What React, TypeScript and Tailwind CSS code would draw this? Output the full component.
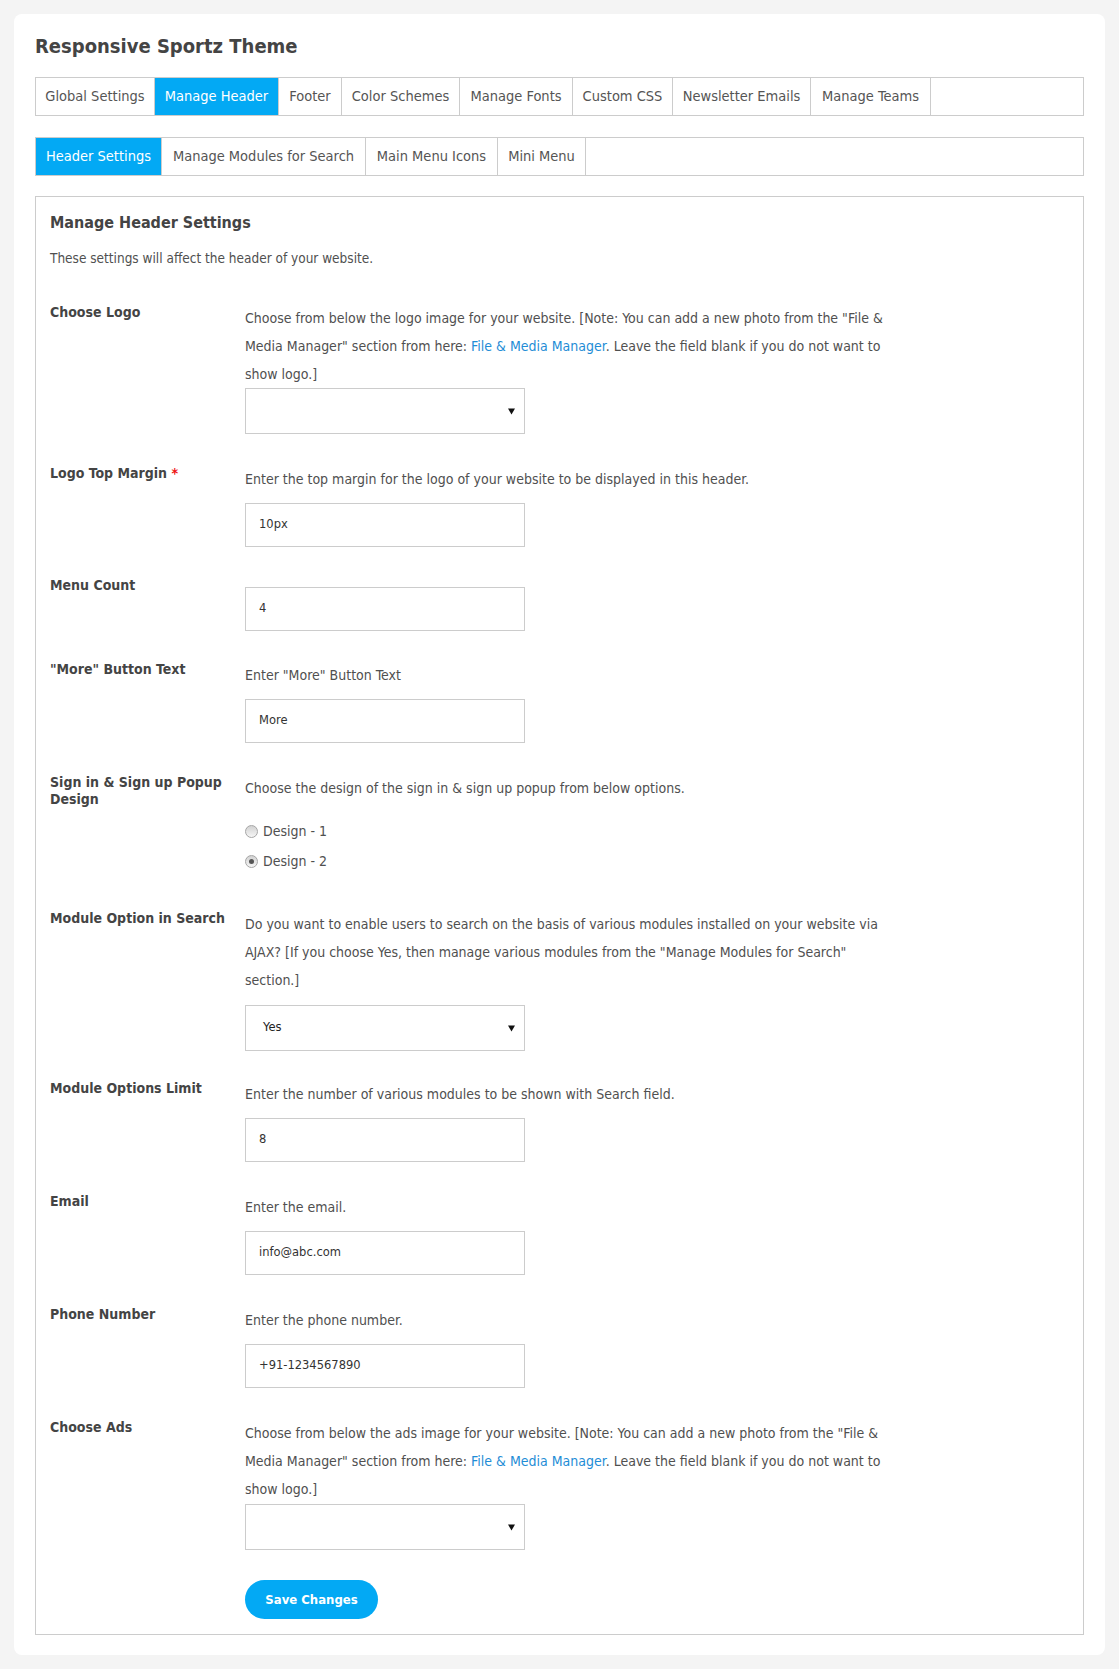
import React from "react"

const font = "font-['Tahoma','DejaVu_Sans_Condensed','Liberation_Sans',sans-serif]"

const mainTabs = [
  { label: "Global Settings", w: "w-[119px]" },
  { label: "Manage Header", w: "w-[124px]", active: true },
  { label: "Footer", w: "w-[63px]" },
  { label: "Color Schemes", w: "w-[118px]" },
  { label: "Manage Fonts", w: "w-[113px]" },
  { label: "Custom CSS", w: "w-[100px]" },
  { label: "Newsletter Emails", w: "w-[138px]" },
  { label: "Manage Teams", w: "w-[120px]" },
]

const subTabs = [
  { label: "Header Settings", w: "w-[126px]", active: true },
  { label: "Manage Modules for Search", w: "w-[204px]" },
  { label: "Main Menu Icons", w: "w-[132px]" },
  { label: "Mini Menu", w: "w-[88px]" },
]

function TabBar({ tabs }: { tabs: { label: string; w: string; active?: boolean }[] }) {
  return (
    <div className="flex h-[39px] border border-[#cccccc] bg-white">
      {tabs.map((t) => (
        <div
          key={t.label}
          className={`${t.w} flex shrink-0 items-center justify-center border-r border-[#cccccc] text-[14.5px] whitespace-nowrap ${
            t.active ? "bg-[#03a9f4] text-white" : "text-[#555555]"
          }`}
        >
          {t.label}
        </div>
      ))}
    </div>
  )
}

function Row({
  label,
  className = "mt-[31px]",
  children,
}: {
  label: React.ReactNode
  className?: string
  children: React.ReactNode
}) {
  return (
    <div className={`flex ${className}`}>
      <div className="w-[195px] shrink-0 text-[14px] leading-[17px] font-bold text-[#444444]">{label}</div>
      <div className="flex-1">{children}</div>
    </div>
  )
}

function Desc({ lines }: { lines: React.ReactNode[] }) {
  return (
    <div className="text-[14px] leading-[28px] text-[#505050]">
      {lines.map((l, i) => (
        <div key={i} className="whitespace-nowrap">
          {l}
        </div>
      ))}
    </div>
  )
}

function TextBox({ value, className = "mt-[10px]" }: { value: string; className?: string }) {
  return (
    <div
      className={`${className} flex h-[44px] w-[280px] items-center border border-[#cccccc] bg-white pl-[13px] font-['DejaVu_Sans',sans-serif] text-[11.5px] text-[#333333]`}
    >
      {value}
    </div>
  )
}

function SelectBox({ value = "", className = "" }: { value?: string; className?: string }) {
  return (
    <div
      className={`${className} flex h-[46px] w-[280px] items-center justify-between border border-[#cccccc] bg-white pl-[17px] pr-[7px] font-['DejaVu_Sans',sans-serif] text-[11.5px] text-[#222222]`}
    >
      <span>{value}</span>
      <svg width="7" height="7" viewBox="0 0 7 7" className="mr-[2px]">
        <path d="M0 0.5 L7 0.5 L3.5 6.5 Z" fill="#111111" />
      </svg>
    </div>
  )
}

function Radio({ checked, label }: { checked?: boolean; label: string }) {
  return (
    <div className="flex h-[30px] items-center gap-[5px] text-[14px] text-[#505050]">
      <span className="flex h-[13px] w-[13px] items-center justify-center rounded-full border border-[#a6a6a6] bg-linear-to-b from-[#d2d2d2] to-[#f6f6f6]">
        {checked && <span className="h-[5px] w-[5px] rounded-full bg-[#555555]" />}
      </span>
      <span>{label}</span>
    </div>
  )
}

const Link = ({ children }: { children: React.ReactNode }) => (
  <span className="text-[#1f8dd6]">{children}</span>
)

export default function App() {
  return (
    <div className={`${font} min-h-[1669px] bg-[#f4f4f4] px-[14px] pt-[14px] pb-[14px]`}>
      <div className="rounded-[8px] bg-white px-[21px] pt-[20px] pb-[20px]">
        <h1 className="text-[20px] leading-[24px] font-bold text-[#444444]">Responsive Sportz Theme</h1>

        <div className="mt-[19px]">
          <TabBar tabs={mainTabs} />
        </div>
        <div className="mt-[21px]">
          <TabBar tabs={subTabs} />
        </div>

        <div className="mt-[20px] border border-[#cccccc] px-[14px] pt-[15px] pb-[15px]">
          <h2 className="text-[16px] leading-[22px] font-bold text-[#444444]">Manage Header Settings</h2>
          <p className="mt-[14px] text-[13.5px] leading-[20px] text-[#505050]">
            These settings will affect the header of your website.
          </p>

          <Row label="Choose Logo" className="mt-[36px]">
            <Desc
              lines={[
                'Choose from below the logo image for your website. [Note: You can add a new photo from the "File &',
                <>
                  Media Manager" section from here: <Link>File &amp; Media Manager</Link>. Leave the field blank if you
                  do not want to
                </>,
                "show logo.]",
              ]}
            />
            <SelectBox />
          </Row>

          <Row
            label={
              <>
                Logo Top Margin <span className="text-[#ee1111]">*</span>
              </>
            }
          >
            <Desc lines={["Enter the top margin for the logo of your website to be displayed in this header."]} />
            <TextBox value="10px" />
          </Row>

          <Row label="Menu Count" className="mt-[30px]">
            <TextBox value="4" />
          </Row>

          <Row label={'"More" Button Text'} className="mt-[30px]">
            <Desc lines={['Enter "More" Button Text']} />
            <TextBox value="More" />
          </Row>

          <Row
            label={
              <>
                Sign in &amp; Sign up Popup
                <br />
                Design
              </>
            }
          >
            <Desc lines={["Choose the design of the sign in & sign up popup from below options."]} />
            <div className="mt-[14px]">
              <Radio label="Design - 1" />
              <Radio label="Design - 2" checked />
            </div>
          </Row>

          <Row label="Module Option in Search" className="mt-[34px]">
            <Desc
              lines={[
                "Do you want to enable users to search on the basis of various modules installed on your website via",
                'AJAX? [If you choose Yes, then manage various modules from the "Manage Modules for Search"',
                "section.]",
              ]}
            />
            <SelectBox value="Yes" className="mt-[11px]" />
          </Row>

          <Row label="Module Options Limit" className="mt-[29px]">
            <Desc lines={["Enter the number of various modules to be shown with Search field."]} />
            <TextBox value="8" />
          </Row>

          <Row label="Email">
            <Desc lines={["Enter the email."]} />
            <TextBox value="info@abc.com" />
          </Row>

          <Row label="Phone Number">
            <Desc lines={["Enter the phone number."]} />
            <TextBox value="+91-1234567890" />
          </Row>

          <Row label="Choose Ads">
            <Desc
              lines={[
                'Choose from below the ads image for your website. [Note: You can add a new photo from the "File &',
                <>
                  Media Manager" section from here: <Link>File &amp; Media Manager</Link>. Leave the field blank if you
                  do not want to
                </>,
                "show logo.]",
              ]}
            />
            <SelectBox className="mt-[1px]" />
          </Row>

          <div className="mt-[30px] pl-[195px]">
            <button
              type="button"
              className="h-[39px] w-[133px] rounded-full bg-[#03a9f4] text-[13px] font-bold text-white"
            >
              Save Changes
            </button>
          </div>
        </div>
      </div>
    </div>
  )
}
